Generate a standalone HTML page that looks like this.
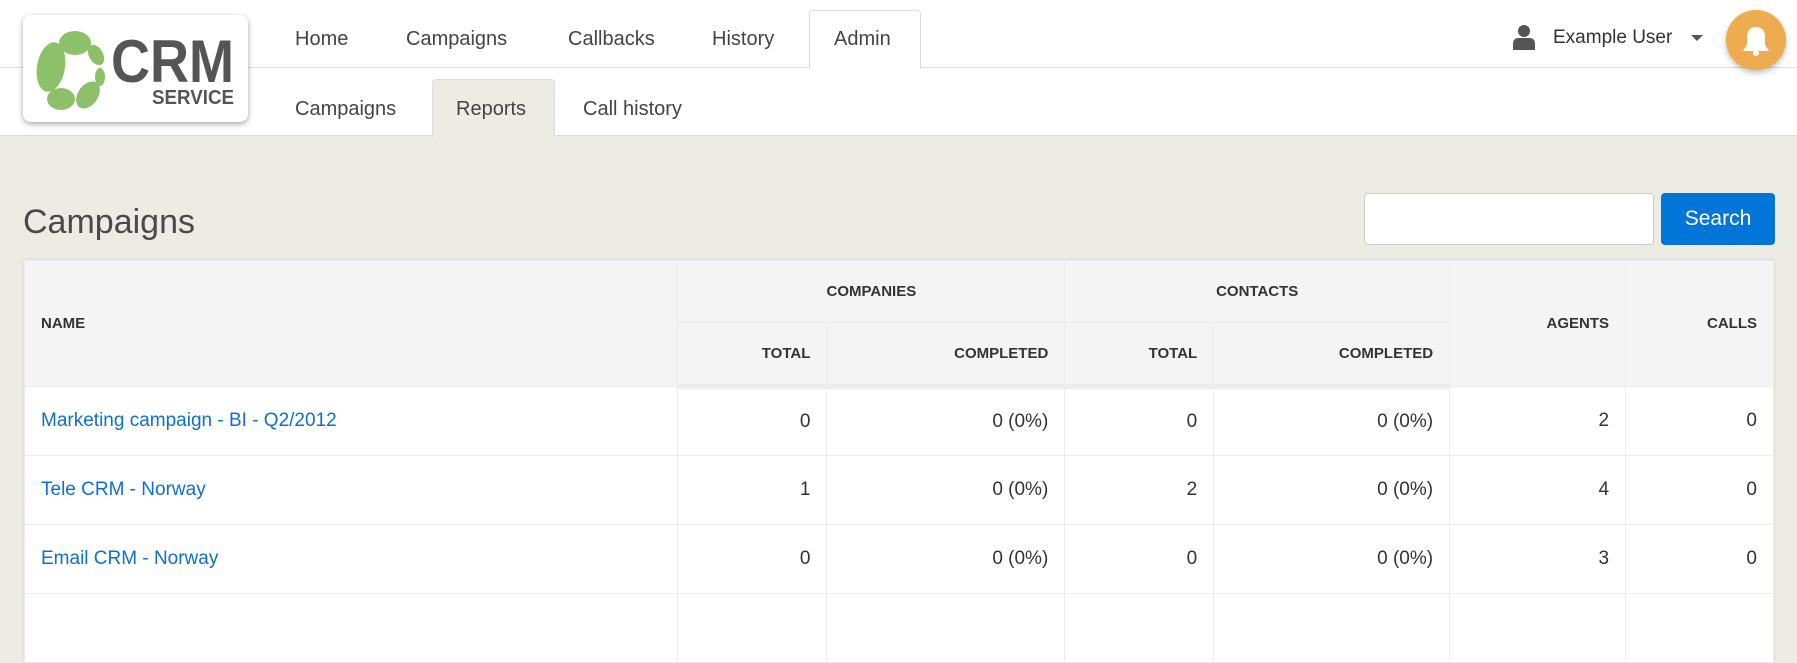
<!DOCTYPE html>
<html><head><meta charset="utf-8"><style>
*{box-sizing:border-box;margin:0;padding:0}
body{width:1797px;height:603px;overflow:hidden;background:#ecebe4;font-family:"Liberation Sans",sans-serif;color:#333;position:relative}
.hdr{position:absolute;left:0;top:0;width:1797px;height:136px;background:#fff;border-bottom:1px solid #dcdcd6}
.line{position:absolute;left:0;top:67px;width:1797px;height:1px;background:#ddd}
.logo{position:absolute;left:23px;top:15px;width:225px;height:107px;background:#fff;border-radius:8px;box-shadow:0 2px 6px rgba(0,0,0,.35)}
.nav{position:absolute;font-size:20px;color:#444}
.tab{position:absolute;border:1px solid #ddd;border-bottom:none;border-radius:4px 4px 0 0}
h1{position:absolute;left:23px;top:203px;font-size:34px;font-weight:normal;color:#4a4a4a}
.inp{position:absolute;left:1364px;top:193px;width:290px;height:52px;background:#fff;border:1px solid #ccc;border-radius:4px}
.btn{position:absolute;left:1661px;top:193px;width:114px;height:52px;background:#0275d8;border-radius:4px;color:#fff;font-size:21px;text-align:center;line-height:52px}
table{position:absolute;left:24px;top:260px;width:1750px;border-collapse:collapse;background:#fff;box-shadow:0 0 3px rgba(0,0,0,.1)}
th{background:#f4f4f4;font-size:15px;font-weight:bold;color:#333;border:1px solid #ececec;padding:0 16px}
td{font-size:19px;border:1px solid #ececec;text-align:right;padding:0 16px;height:69px;color:#333}
td.n{text-align:left;color:#0c6fd6}
thead tr:last-child th{border-bottom:5px solid #ececec}
</style></head><body>
<div class="hdr"></div><div class="line"></div>
<div class="tab" style="left:809px;top:10px;width:112px;height:59px;background:#fff"></div>
<div class="tab" style="left:432px;top:79px;width:123px;height:58px;background:#ecebe4"></div>
<div class="nav" style="left:295px;top:28px">Home</div>
<div class="nav" style="left:406px;top:28px">Campaigns</div>
<div class="nav" style="left:568px;top:28px">Callbacks</div>
<div class="nav" style="left:712px;top:28px">History</div>
<div class="nav" style="left:834px;top:28px">Admin</div>
<div class="nav" style="left:295px;top:98px">Campaigns</div>
<div class="nav" style="left:456px;top:98px">Reports</div>
<div class="nav" style="left:583px;top:98px">Call history</div>
<div class="logo">
<svg width="225" height="107" viewBox="0 0 225 107">
<g fill="#8cc16a">
<ellipse cx="28" cy="52" rx="14" ry="25" transform="rotate(10 28 52)"/>
<ellipse cx="52" cy="28" rx="16" ry="12"/>
<ellipse cx="73" cy="40" rx="7" ry="11" transform="rotate(-30 73 40)"/>
<ellipse cx="77" cy="62" rx="5" ry="9"/>
<ellipse cx="65" cy="80" rx="10" ry="15" transform="rotate(35 65 80)"/>
<ellipse cx="38" cy="84" rx="14" ry="11"/>
</g>
<text x="88" y="67" font-family="Liberation Sans" font-weight="bold" font-size="60" fill="#555" textLength="123" lengthAdjust="spacingAndGlyphs">CRM</text>
<text x="129" y="89" font-family="Liberation Sans" font-weight="bold" font-size="20" fill="#555" textLength="82" lengthAdjust="spacingAndGlyphs">SERVICE</text>
</svg></div>
<svg style="position:absolute;left:1512px;top:24px" width="24" height="26" viewBox="0 0 24 26"><circle cx="12" cy="7" r="6" fill="#555"/><path d="M1 26 V20 Q1 14 7 14 H17 Q23 14 23 20 V26Z" fill="#555"/></svg>
<div class="nav" style="left:1553px;top:27px;font-size:19px;color:#333">Example User</div>
<div style="position:absolute;left:1691px;top:35px;border:6px solid transparent;border-top:6px solid #555"></div>
<div style="position:absolute;left:1726px;top:10px;width:60px;height:60px;border-radius:50%;background:#eeac50;box-shadow:0 3px 6px rgba(0,0,0,.25)">
<svg width="60" height="60" viewBox="0 0 60 60"><path d="M30 17 Q21 17 21 28 V35 L17 41 H43 L39 35 V28 Q39 17 30 17Z" fill="#fff"/><circle cx="30" cy="43" r="3" fill="#fff"/></svg></div>
<h1>Campaigns</h1>
<div class="inp"></div><div class="btn">Search</div>
<table>
<colgroup><col style="width:654px"><col style="width:149px"><col style="width:238px"><col style="width:149px"><col style="width:236px"><col style="width:176px"><col style="width:148px"></colgroup>
<thead>
<tr style="height:62px"><th rowspan="2" style="text-align:left">NAME</th><th colspan="2">COMPANIES</th><th colspan="2">CONTACTS</th><th rowspan="2" style="text-align:right">AGENTS</th><th rowspan="2" style="text-align:right">CALLS</th></tr>
<tr style="height:64px"><th style="text-align:right">TOTAL</th><th style="text-align:right">COMPLETED</th><th style="text-align:right">TOTAL</th><th style="text-align:right">COMPLETED</th></tr>
</thead>
<tbody>
<tr><td class="n">Marketing campaign - BI - Q2/2012</td><td>0</td><td>0 (0%)</td><td>0</td><td>0 (0%)</td><td>2</td><td>0</td></tr>
<tr><td class="n">Tele CRM - Norway</td><td>1</td><td>0 (0%)</td><td>2</td><td>0 (0%)</td><td>4</td><td>0</td></tr>
<tr><td class="n">Email CRM - Norway</td><td>0</td><td>0 (0%)</td><td>0</td><td>0 (0%)</td><td>3</td><td>0</td></tr>
<tr><td class="n"></td><td></td><td></td><td></td><td></td><td></td><td></td></tr>
</tbody></table>
</body></html>
